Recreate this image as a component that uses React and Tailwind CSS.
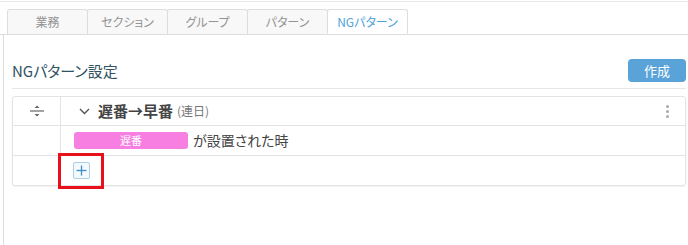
import React from "react";

const tabs = ["業務", "セクション", "グループ", "パターン", "NGパターン"];

function SortIcon() {
  return (
    <svg width="16" height="14" viewBox="0 0 16 14">
      <path d="M5.5 4 L8 1.5 L10.5 4 Z" fill="#666" />
      <line x1="1" y1="7" x2="15" y2="7" stroke="#666" strokeWidth="1.2" />
      <path d="M5.5 10 L8 12.5 L10.5 10 Z" fill="#666" />
    </svg>
  );
}

export default function App() {
  return (
    <div
      className="relative w-[688px] h-[245px] overflow-hidden bg-white pt-px [font-feature-settings:'palt']"
      style={{ fontFamily: '"Noto Sans CJK JP", "Noto Sans", sans-serif' }}
    >
      <div className="border-t border-[#e8e8e8]">
        <div className="flex pl-[7px] pt-[7px] border-b border-[#dddddd]">
          {tabs.map((t, i) => {
            const active = i === tabs.length - 1;
            return (
              <div
                key={t}
                className={
                  "w-[81px] h-[25px] -ml-px first:ml-0 border border-[#dddddd] rounded-t-[3px] flex items-center justify-center text-[12px] " +
                  (active
                    ? "bg-white border-b-white -mb-px text-[#4ea3d8]"
                    : "bg-[#f8f8f8] border-b-0 text-[#939393]")
                }
              >
                {t}
              </div>
            );
          })}
        </div>
        <div className="ml-[3px] h-[220px] border-l border-[#dddddd] pl-[8px] pr-[2px]">
          <div className="flex items-center justify-between pt-[24px] pb-[6px] border-b border-[#e6e6e6]">
            <div className="text-[15px] text-[#2f5363] leading-none">NGパターン設定</div>
            <button className="w-[58px] h-[23px] rounded-[4px] bg-[#5aa3d9] text-white text-[13px] flex items-center justify-center">
              作成
            </button>
          </div>
          <div className="mt-[7px] border border-[#e3e3e3] rounded-[3px] shadow-[0_1px_2px_rgba(0,0,0,0.06)]">
            <div className="flex h-[29px] border-b border-[#e3e3e3]">
              <div className="w-[48px] border-r border-[#e3e3e3] flex items-center justify-center">
                <SortIcon />
              </div>
              <div className="flex-1 flex items-center pl-[18px] pr-[16px]">
                <svg width="11" height="7" viewBox="0 0 11 7" className="mr-[8px]">
                  <path d="M1 1 L5.5 5.5 L10 1" fill="none" stroke="#555" strokeWidth="1.4" />
                </svg>
                <span className="text-[15px] font-bold text-[#444]">遅番→早番</span>
                <span className="ml-[4px] text-[12px] text-[#777]">(連日)</span>
                <div className="ml-auto flex flex-col gap-[2px]">
                  <span className="w-[3px] h-[3px] rounded-full bg-[#aaa]" />
                  <span className="w-[3px] h-[3px] rounded-full bg-[#aaa]" />
                  <span className="w-[3px] h-[3px] rounded-full bg-[#aaa]" />
                </div>
              </div>
            </div>
            <div className="flex h-[30px] border-b border-[#e3e3e3]">
              <div className="w-[48px] border-r border-[#e3e3e3]" />
              <div className="flex-1 flex items-center pl-[13px]">
                <span className="w-[114px] h-[17px] rounded-[3px] bg-[#f77fe2] text-white text-[11px] flex items-center justify-center">
                  遅番
                </span>
                <span className="ml-[5px] text-[14px] text-[#444]">が設置された時</span>
              </div>
            </div>
            <div className="flex h-[29px]">
              <div className="w-[48px]" />
              <div className="flex-1 flex items-center pl-[12px]">
                <div className="w-[17px] h-[17px] rounded-[2px] border border-[#a9cfe9] bg-[#f3f9fd] flex items-center justify-center">
                  <svg width="11" height="11" viewBox="0 0 11 11">
                    <line x1="5.5" y1="0.5" x2="5.5" y2="10.5" stroke="#3f8fc6" strokeWidth="1.3" />
                    <line x1="0.5" y1="5.5" x2="10.5" y2="5.5" stroke="#3f8fc6" strokeWidth="1.3" />
                  </svg>
                </div>
              </div>
            </div>
          </div>
        </div>
      </div>
      <div className="absolute left-[58px] top-[153px] w-[46px] h-[36px] border-[3px] border-[#e8101a]" />
    </div>
  );
}
